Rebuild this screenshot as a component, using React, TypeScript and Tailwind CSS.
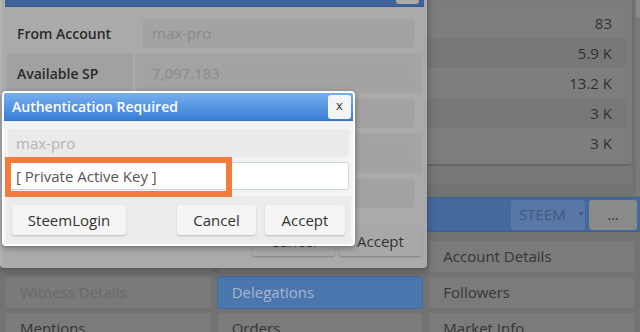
import React from "react";

const font = { fontFamily: '"Open Sans", "Liberation Sans", sans-serif' };

function MenuBtn({ label, tone }: { label?: string; tone: "dim" | "normal" | "blue" }) {
  const cls =
    tone === "blue"
      ? "bg-[#4b76ae] text-[#a4b6cf] border-[#45699a]"
      : tone === "dim"
      ? "bg-[#7a7a7a] text-[#686868] border-[#737373]"
      : "bg-[#7b7b7b] text-[#353535] border-[#737373]";
  return (
    <div className={`h-[33px] rounded-[3px] border flex items-center pl-[14px] text-[15px] ${cls}`}>
      {label}
    </div>
  );
}

export default function App() {
  const rows = ["83", "5.9 K", "13.2 K", "3 K", "3 K"];
  return (
    <div className="relative w-[640px] h-[332px] overflow-hidden bg-[#737373]" style={font}>
      {/* Underlying page */}
      <div className="flex flex-col">
        <div className="h-[197px] flex">
          <div className="flex-1" />
          <div className="w-[212px] pr-[4px] flex flex-col">
            <div className="bg-[#7c7c7c] rounded-b-[3px] shadow-[0_2px_3px_rgba(0,0,0,0.15)] pt-[8px] pb-[6px] pl-[2px] pr-[6px]">
              {rows.map((v, i) => (
                <div
                  key={i}
                  className={`h-[30px] flex items-center justify-end pr-[14px] text-[15px] text-[#303030] ${
                    i % 2 === 1 ? "bg-[#787878]" : "bg-[#7e7e7e]"
                  }`}
                >
                  {v}
                </div>
              ))}
            </div>
            <div className="h-[18px] mt-[2px] bg-[#787878] rounded-b-[3px]" />
          </div>
          <div className="w-[4px] bg-[#7a7a7a]">
            <div className="h-[17px] bg-[#8a8a8a]" />
          </div>
        </div>
        <div className="h-[35px] bg-[#46699d] border-y border-[#3e5f8e] flex items-center justify-end gap-[4px] pr-[3px]">
          <div className="w-[74px] h-[30px] bg-[#5877a6] rounded-[3px] flex items-center pl-[8px] text-[15px] text-[#3f5880]">
            STEEM<span className="ml-[12px] text-[7px]">▼</span>
          </div>
          <div className="w-[48px] h-[30px] bg-[#8a8a8a] rounded-[3px] flex items-center justify-center text-[14px] text-[#333]">
            ...
          </div>
        </div>
        <div className="grid grid-cols-3 gap-x-[5px] gap-y-[3px] px-[5px] pt-[8px]">
          <MenuBtn tone="normal" />
          <MenuBtn tone="normal" />
          <MenuBtn tone="normal" label="Account Details" />
          <MenuBtn tone="dim" label="Witness Details" />
          <MenuBtn tone="blue" label="Delegations" />
          <MenuBtn tone="normal" label="Followers" />
          <MenuBtn tone="normal" label="Mentions" />
          <MenuBtn tone="normal" label="Orders" />
          <MenuBtn tone="normal" label="Market Info" />
        </div>
      </div>

      {/* Underlying delegation dialog */}
      <div className="absolute left-0 top-[-28px] w-[427px] h-[296px] bg-[#aaaaaa] rounded-[4px] border-l-[2px] border-[#b2b2b2] shadow-[0_3px_8px_rgba(0,0,0,0.35)] flex flex-col">
        <div className="h-[35px] mx-[3px] bg-[#3f6399] border-b border-[#36578a] flex justify-end items-start pr-[5px]">
          <div className="w-[23px] h-[29px] mt-[3px] bg-[#a9a9a9] rounded-[3px]" />
        </div>
        <div className="flex flex-col px-[5px] pt-[6px]">
          {[
            { l: "From Account", v: "max-pro", dark: false },
            { l: "Available SP", v: "7,097.183", dark: true },
            { l: "", v: "", dark: false },
            { l: "", v: "", dark: true },
            { l: "", v: "", dark: false },
          ].map((r, i) => (
            <div key={i} className="h-[40px] flex gap-[2px]">
              <div
                className={`w-[126px] flex items-center pl-[10px] text-[14px] font-semibold text-[#2a2a2a] ${
                  r.dark ? "bg-[#a1a1a1]" : ""
                }`}
              >
                {r.l}
              </div>
              <div className={`flex-1 flex items-center pl-[8px] pr-[8px] ${r.dark ? "bg-[#a4a4a4]" : ""}`}>
                <div className="w-full h-[29px] bg-[#a3a3a3] border border-[#a0a0a0] rounded-[3px] flex items-center pl-[8px] text-[15px] text-[#8a8a8a]">
                  {r.v}
                </div>
              </div>
            </div>
          ))}
        </div>
        <div className="flex justify-end gap-[4px] pr-[5px] mt-[13px]">
          <div className="w-[83px] h-[30px] bg-[#a8a8a8] rounded-[3px] shadow-[0_1px_2px_rgba(0,0,0,0.25)] flex items-center justify-center text-[15px] text-[#333]">
            Cancel
          </div>
          <div className="w-[83px] h-[30px] bg-[#a8a8a8] rounded-[3px] shadow-[0_1px_2px_rgba(0,0,0,0.25)] flex items-center justify-center text-[15px] text-[#333]">
            Accept
          </div>
        </div>
      </div>

      {/* Auth dialog */}
      <div className="absolute left-[2px] top-[91px] w-[353px] h-[155px] bg-[#f3f3f3] border-[2px] border-white rounded-[4px] shadow-[0_2px_6px_rgba(0,0,0,0.35)] flex flex-col">
        <div className="h-[28px] rounded-t-[2px] bg-gradient-to-b from-[#74afef] to-[#3a7dd5] border-b border-[#3472c4] flex items-center justify-between pl-[8px] pr-[2px]">
          <span className="text-[14px] font-semibold text-white">Authentication Required</span>
          <div className="w-[23px] h-[24px] bg-[#f4f4f4] rounded-[3px] flex items-center justify-center text-[13px] text-[#333] leading-none pb-[2px]">
            x
          </div>
        </div>
        <div className="flex flex-col gap-[5px] px-[4px] pt-[8px]">
          <div className="h-[28px] bg-[#eaeaea] rounded-[3px] flex items-center pl-[8px] text-[15px] text-[#b3b3b3]">
            max-pro
          </div>
          <div className="h-[28px] bg-white border border-[#c9d5e2] rounded-[3px] flex items-center pl-[7px] text-[15px] text-[#555]">
            [ Private Active Key ]
          </div>
        </div>
        <div className="mt-[6px] mx-[2px] flex-1 bg-[#ececec] flex items-center px-[6px] gap-[9px]">
          <div className="w-[114px] h-[30px] bg-[#f5f5f5] rounded-[3px] shadow-[0_1px_2px_rgba(0,0,0,0.2)] flex items-center justify-center text-[15px] text-[#333]">
            SteemLogin
          </div>
          <div className="flex-1" />
          <div className="w-[79px] h-[30px] bg-[#f5f5f5] rounded-[3px] shadow-[0_1px_2px_rgba(0,0,0,0.2)] flex items-center justify-center text-[15px] text-[#333]">
            Cancel
          </div>
          <div className="w-[80px] h-[30px] bg-[#f5f5f5] rounded-[3px] shadow-[0_1px_2px_rgba(0,0,0,0.2)] flex items-center justify-center text-[15px] text-[#333]">
            Accept
          </div>
        </div>
      </div>

      {/* Orange annotation box */}
      <div className="absolute left-[5px] top-[157px] w-[227px] h-[40px] border-[6px] border-[#f47b3e]" />
    </div>
  );
}
